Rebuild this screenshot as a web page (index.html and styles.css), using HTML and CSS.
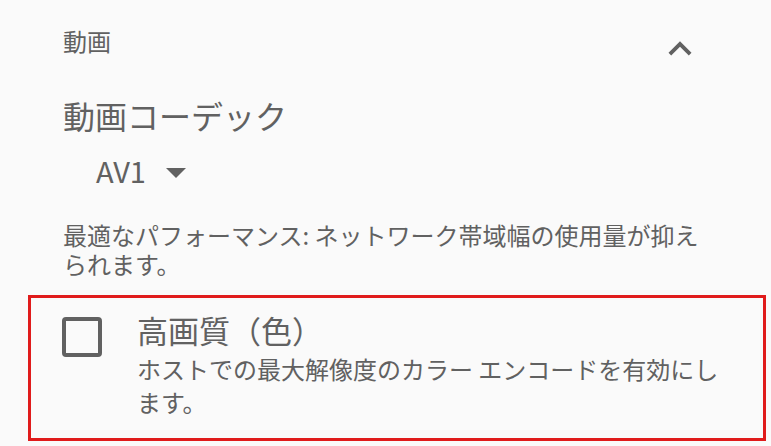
FILE: index.html
```html
<!DOCTYPE html>
<html lang="ja">
<head>
<meta charset="utf-8">
<link rel="stylesheet" href="styles.css">
</head>
<body>
<div class="page">
  <div class="header">
    <span class="title">動画</span>
    <svg class="chevron" viewBox="0 0 24 24" width="46" height="46"><path d="M12 8l-6 6 1.41 1.41L12 10.83l4.59 4.58L18 14z" fill="#616161"/></svg>
  </div>
  <div class="field-label">動画コーデック</div>
  <div class="select"><span class="select-value">AV1</span><span class="caret"></span></div>
  <p class="desc">最適なパフォーマンス: ネットワーク帯域幅の使用量が抑えられます。</p>
  <div class="option">
    <span class="checkbox"></span>
    <div class="option-text">
      <div class="option-title">高画質（色）</div>
      <div class="option-desc">ホストでの最大解像度のカラー エンコードを有効にします。</div>
    </div>
  </div>
</div>
</body>
</html>
```
FILE: styles.css
```css
html, body {
  margin: 0;
  padding: 0;
  background: #fafafa;
}
body {
  width: 771px;
  height: 446px;
  overflow: hidden;
  font-family: "Noto Sans CJK JP", "Noto Sans", sans-serif;
  color: #616161;
}
.page {
  display: flex;
  flex-direction: column;
}
.header {
  display: flex;
  justify-content: space-between;
  align-items: flex-start;
  padding: 25px 68px 0 63px;
}
.title {
  font-size: 24px;
  line-height: 32px;
}
.chevron {
  display: block;
  margin-top: 1px;
}
.field-label {
  margin-top: 22px;
  padding-left: 63px;
  font-size: 32px;
  line-height: 42px;
}
.select {
  display: flex;
  align-items: flex-start;
  margin-top: 14px;
  padding-left: 96px;
  font-size: 29px;
  line-height: 40px;
}
.caret {
  width: 0;
  height: 0;
  margin-top: 18px;
  margin-left: 20px;
  border-left: 10px solid transparent;
  border-right: 10px solid transparent;
  border-top: 10px solid #616161;
}
.desc {
  margin: 30px 0 0 0;
  padding: 0 55px 0 63px;
  font-size: 24px;
  line-height: 29px;
}
.option {
  display: flex;
  align-items: flex-start;
  margin: 17px 5px 0 28px;
  padding: 12px 38px 20px 31px;
  border: 3px solid #e01b1b;
}
.checkbox {
  flex: none;
  width: 32px;
  height: 32px;
  margin-top: 7px;
  border: 4px solid #616161;
  border-radius: 4px;
}
.option-text {
  margin-left: 35px;
}
.option-title {
  font-size: 31px;
  line-height: 40px;
}
.option-desc {
  margin-top: 2px;
  font-size: 24px;
  line-height: 33px;
}
```
